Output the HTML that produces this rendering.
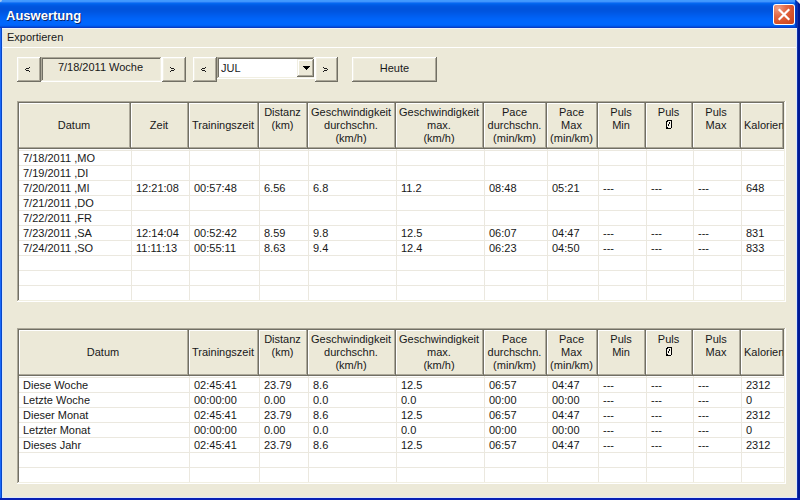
<!DOCTYPE html>
<html><head><meta charset="utf-8"><style>
html,body{margin:0;padding:0;}
body{width:800px;height:500px;overflow:hidden;position:relative;background:#ECE9D8;font-family:"Liberation Sans",sans-serif;font-size:11px;color:#000;}
div{position:absolute;box-sizing:border-box;}
.t{position:absolute;white-space:nowrap;line-height:13px;color:#181818;}
.c{text-align:center;}
.tt{position:absolute;white-space:nowrap;font-weight:bold;font-size:13px;line-height:16px;}
.os{display:inline-block;width:6px;height:9px;box-sizing:border-box;border:1px solid #000;border-left-width:2px;border-bottom-width:2px;position:relative;top:1px;background:linear-gradient(to top right,transparent 43%,#000 43%,#000 60%,transparent 60%);}
</style></head><body>
<div style="left:0;top:0;width:800px;height:28px;background:linear-gradient(to bottom,#4299FE 0px,#4299FE 1px,#3F95FD 1px,#3F95FD 2px,#2078F6 2px,#2078F6 3px,#0367EF 3px,#0367EF 4px,#015EE8 4px,#015EE8 5px,#0059E3 5px,#0059E3 6px,#0055DF 6px,#0055DF 7px,#0054DD 7px,#0054DD 8px,#0053DC 8px,#0053DC 9px,#0053DC 9px,#0053DC 10px,#0054DE 10px,#0054DE 11px,#0055E0 11px,#0055E0 12px,#0057E3 12px,#0057E3 13px,#0059E7 13px,#0059E7 14px,#005BEA 14px,#005BEA 15px,#005DEE 15px,#005DEE 16px,#005FF1 16px,#005FF1 17px,#0061F4 17px,#0061F4 18px,#0063F7 18px,#0063F7 19px,#0064F9 19px,#0064F9 20px,#0065FB 20px,#0065FB 21px,#0066FC 21px,#0066FC 22px,#0066FD 22px,#0066FD 23px,#0066FD 23px,#0066FD 24px,#0065FC 24px,#0065FC 25px,#0060F4 25px,#0060F4 26px,#0052E2 26px,#0052E2 27px,#0A3CC4 27px,#0A3CC4 28px);"></div>
<div style="left:0;top:0;width:2px;height:2px;background:#A8C8F0;border-radius:0 0 2px 0;"></div>
<span class="tt" style="left:7px;top:9px;color:#0A246A;">Auswertung</span>
<span class="tt" style="left:6px;top:8px;color:#FFFFFF;">Auswertung</span>
<div style="left:773px;top:4px;width:22px;height:21px;border-radius:3px;background:#FFFFFF;"></div>
<div style="left:774px;top:5px;width:20px;height:19px;border-radius:2px;background:radial-gradient(circle at 20% 15%,#F0A088 0%,#E36A47 35%,#D8532C 65%,#C8411A 100%);"></div>
<svg style="position:absolute;left:773px;top:4px" width="22" height="21"><path d="M6.5 6 L15.5 15 M15.5 6 L6.5 15" stroke="#FFFFFF" stroke-width="2.2" stroke-linecap="square"/></svg>
<div style="left:0;top:28px;width:1px;height:472px;background:#1A68F8;"></div>
<div style="left:1px;top:28px;width:1px;height:472px;background:#0848C8;"></div>
<div style="left:2px;top:28px;width:1px;height:470px;background:#DCE8FA;"></div>
<div style="left:796px;top:28px;width:1px;height:470px;background:#DCE8FA;"></div>
<div style="left:797px;top:0;width:1px;height:500px;background:#1232A8;"></div>
<div style="left:798px;top:0;width:2px;height:500px;background:#001A94;"></div>
<div style="left:795px;top:0;width:2px;height:28px;background:linear-gradient(to right,#0048D0,#0028B0);"></div>
<div style="left:2px;top:497px;width:795px;height:1px;background:#DCE8FA;"></div>
<div style="left:0;top:498px;width:800px;height:2px;background:#0820B4;"></div>
<svg style="position:absolute;left:794px;top:0" width="6" height="6"><path d="M2 0 L6 0 L6 4 Z" fill="#E8EEF8"/></svg>
<div style="left:3px;top:29px;width:793px;height:468px;background:#ECE9D8;"></div>
<div style="left:2px;top:28px;width:795px;height:1px;background:#F0F4FA;"></div>
<span class="t" style="left:7px;top:31px;">Exportieren</span>
<div style="left:3px;top:47px;width:793px;height:1px;background:#FFFFFF;"></div>
<div style="left:17px;top:57px;width:24px;height:25px;box-shadow:inset -1px -1px #716F64,inset 1px 1px #FFFFFF,inset -2px -2px #ACA899,inset 2px 2px #F1EFE2;background:#ECE9D8;"></div>
<div style="left:29px;top:67px;width:1px;height:1px;background:#1a1a1a;"></div>
<div style="left:26px;top:68px;width:3px;height:1px;background:#1a1a1a;"></div>
<div style="left:25px;top:69px;width:1px;height:1px;background:#1a1a1a;"></div>
<div style="left:26px;top:70px;width:3px;height:1px;background:#1a1a1a;"></div>
<div style="left:29px;top:71px;width:1px;height:1px;background:#1a1a1a;"></div>
<div style="left:41px;top:57px;width:121px;height:25px;box-shadow:inset -1px -1px #FFFFFF,inset 1px 1px #ACA899,inset -2px -2px #F1EFE2,inset 2px 2px #716F64;background:#ECE9D8;"></div>
<span class="t c" style="left:41px;width:119px;top:61px;">7/18/2011 Woche</span>
<div style="left:162px;top:57px;width:24px;height:25px;box-shadow:inset -1px -1px #716F64,inset 1px 1px #FFFFFF,inset -2px -2px #ACA899,inset 2px 2px #F1EFE2;background:#ECE9D8;"></div>
<div style="left:170px;top:67px;width:1px;height:1px;background:#1a1a1a;"></div>
<div style="left:171px;top:68px;width:3px;height:1px;background:#1a1a1a;"></div>
<div style="left:174px;top:69px;width:1px;height:1px;background:#1a1a1a;"></div>
<div style="left:171px;top:70px;width:3px;height:1px;background:#1a1a1a;"></div>
<div style="left:170px;top:71px;width:1px;height:1px;background:#1a1a1a;"></div>
<div style="left:193px;top:57px;width:24px;height:25px;box-shadow:inset -1px -1px #716F64,inset 1px 1px #FFFFFF,inset -2px -2px #ACA899,inset 2px 2px #F1EFE2;background:#ECE9D8;"></div>
<div style="left:205px;top:67px;width:1px;height:1px;background:#1a1a1a;"></div>
<div style="left:202px;top:68px;width:3px;height:1px;background:#1a1a1a;"></div>
<div style="left:201px;top:69px;width:1px;height:1px;background:#1a1a1a;"></div>
<div style="left:202px;top:70px;width:3px;height:1px;background:#1a1a1a;"></div>
<div style="left:205px;top:71px;width:1px;height:1px;background:#1a1a1a;"></div>
<div style="left:217px;top:57px;width:98px;height:22px;box-shadow:inset -1px -1px #FFFFFF,inset 1px 1px #ACA899,inset -2px -2px #F1EFE2,inset 2px 2px #716F64;background:#FFFFFF;"></div>
<span class="t" style="left:221px;top:62px;color:#222;">JUL</span>
<div style="left:297px;top:59px;width:17px;height:18px;box-shadow:inset -1px -1px #716F64,inset 1px 1px #F1EFE2,inset -2px -2px #ACA899,inset 2px 2px #FFFFFF;background:#ECE9D8;"></div>
<div style="left:303px;top:66px;width:7px;height:1px;background:#000;"></div>
<div style="left:304px;top:67px;width:5px;height:1px;background:#000;"></div>
<div style="left:305px;top:68px;width:3px;height:1px;background:#000;"></div>
<div style="left:306px;top:69px;width:1px;height:1px;background:#000;"></div>
<div style="left:315px;top:57px;width:23px;height:25px;box-shadow:inset -1px -1px #716F64,inset 1px 1px #FFFFFF,inset -2px -2px #ACA899,inset 2px 2px #F1EFE2;background:#ECE9D8;"></div>
<div style="left:323px;top:67px;width:1px;height:1px;background:#1a1a1a;"></div>
<div style="left:324px;top:68px;width:3px;height:1px;background:#1a1a1a;"></div>
<div style="left:327px;top:69px;width:1px;height:1px;background:#1a1a1a;"></div>
<div style="left:324px;top:70px;width:3px;height:1px;background:#1a1a1a;"></div>
<div style="left:323px;top:71px;width:1px;height:1px;background:#1a1a1a;"></div>
<div style="left:352px;top:57px;width:85px;height:25px;box-shadow:inset -1px -1px #716F64,inset 1px 1px #FFFFFF,inset -2px -2px #ACA899,inset 2px 2px #F1EFE2;background:#ECE9D8;"></div>
<span class="t c" style="left:352px;width:85px;top:62px;">Heute</span>
<div style="left:17px;top:101px;width:769px;height:201px;box-shadow:inset -1px -1px #FFFFFF,inset 1px 1px #ACA899,inset -2px -2px #F1EFE2,inset 2px 2px #716F64;background:#FFFFFF;"></div>
<div style="left:19px;top:103px;width:112px;height:46px;box-shadow:inset -1px -1px #716F64,inset -2px -2px #ACA899,inset 1px 1px #FFFFFF;background:#ECE9D8;"></div>
<span class="t c" style="left:19px;width:110px;top:119px;">Datum</span>
<div style="left:131px;top:103px;width:58px;height:46px;box-shadow:inset -1px -1px #716F64,inset -2px -2px #ACA899,inset 1px 1px #FFFFFF;background:#ECE9D8;"></div>
<span class="t c" style="left:131px;width:56px;top:119px;">Zeit</span>
<div style="left:189px;top:103px;width:70px;height:46px;box-shadow:inset -1px -1px #716F64,inset -2px -2px #ACA899,inset 1px 1px #FFFFFF;background:#ECE9D8;"></div>
<span class="t c" style="left:189px;width:68px;top:119px;">Trainingszeit</span>
<div style="left:259px;top:103px;width:49px;height:46px;box-shadow:inset -1px -1px #716F64,inset -2px -2px #ACA899,inset 1px 1px #FFFFFF;background:#ECE9D8;"></div>
<span class="t c" style="left:259px;width:47px;top:106px;">Distanz<br>(km)</span>
<div style="left:308px;top:103px;width:88px;height:46px;box-shadow:inset -1px -1px #716F64,inset -2px -2px #ACA899,inset 1px 1px #FFFFFF;background:#ECE9D8;"></div>
<span class="t c" style="left:308px;width:86px;top:106px;">Geschwindigkeit<br>durchschn.<br>(km/h)</span>
<div style="left:396px;top:103px;width:88px;height:46px;box-shadow:inset -1px -1px #716F64,inset -2px -2px #ACA899,inset 1px 1px #FFFFFF;background:#ECE9D8;"></div>
<span class="t c" style="left:396px;width:86px;top:106px;">Geschwindigkeit<br>max.<br>(km/h)</span>
<div style="left:484px;top:103px;width:63px;height:46px;box-shadow:inset -1px -1px #716F64,inset -2px -2px #ACA899,inset 1px 1px #FFFFFF;background:#ECE9D8;"></div>
<span class="t c" style="left:484px;width:61px;top:106px;">Pace<br>durchschn.<br>(min/km)</span>
<div style="left:547px;top:103px;width:51px;height:46px;box-shadow:inset -1px -1px #716F64,inset -2px -2px #ACA899,inset 1px 1px #FFFFFF;background:#ECE9D8;"></div>
<span class="t c" style="left:547px;width:49px;top:106px;">Pace<br>Max<br>(min/km)</span>
<div style="left:598px;top:103px;width:48px;height:46px;box-shadow:inset -1px -1px #716F64,inset -2px -2px #ACA899,inset 1px 1px #FFFFFF;background:#ECE9D8;"></div>
<span class="t c" style="left:598px;width:46px;top:106px;">Puls<br>Min</span>
<div style="left:646px;top:103px;width:47px;height:46px;box-shadow:inset -1px -1px #716F64,inset -2px -2px #ACA899,inset 1px 1px #FFFFFF;background:#ECE9D8;"></div>
<div style="left:667px;top:121px;width:4px;height:7px;background:#F6F4EA;"></div>
<div style="left:667px;top:120px;width:5px;height:1px;background:#000;"></div>
<div style="left:666px;top:121px;width:2px;height:1px;background:#000;"></div>
<div style="left:671px;top:121px;width:1px;height:1px;background:#000;"></div>
<div style="left:666px;top:122px;width:1px;height:1px;background:#000;"></div>
<div style="left:669px;top:122px;width:1px;height:1px;background:#000;"></div>
<div style="left:671px;top:122px;width:1px;height:1px;background:#000;"></div>
<div style="left:666px;top:123px;width:1px;height:1px;background:#000;"></div>
<div style="left:669px;top:123px;width:1px;height:1px;background:#000;"></div>
<div style="left:671px;top:123px;width:1px;height:1px;background:#000;"></div>
<div style="left:666px;top:124px;width:1px;height:1px;background:#000;"></div>
<div style="left:668px;top:124px;width:1px;height:1px;background:#000;"></div>
<div style="left:671px;top:124px;width:1px;height:1px;background:#000;"></div>
<div style="left:666px;top:125px;width:1px;height:1px;background:#000;"></div>
<div style="left:668px;top:125px;width:1px;height:1px;background:#000;"></div>
<div style="left:671px;top:125px;width:1px;height:1px;background:#000;"></div>
<div style="left:666px;top:126px;width:1px;height:1px;background:#000;"></div>
<div style="left:671px;top:126px;width:1px;height:1px;background:#000;"></div>
<div style="left:666px;top:127px;width:2px;height:1px;background:#000;"></div>
<div style="left:671px;top:127px;width:1px;height:1px;background:#000;"></div>
<div style="left:666px;top:128px;width:5px;height:1px;background:#000;"></div>
<span class="t c" style="left:646px;width:45px;top:106px;">Puls</span>
<div style="left:693px;top:103px;width:48px;height:46px;box-shadow:inset -1px -1px #716F64,inset -2px -2px #ACA899,inset 1px 1px #FFFFFF;background:#ECE9D8;"></div>
<span class="t c" style="left:693px;width:46px;top:106px;">Puls<br>Max</span>
<div style="left:741px;top:103px;width:43px;height:46px;box-shadow:inset -1px -1px #716F64,inset -2px -2px #ACA899,inset 1px 1px #FFFFFF;background:#ECE9D8;"></div>
<span class="t" style="left:744px;width:39px;overflow:hidden;top:119px;">Kalorien</span>
<div style="left:19px;top:150px;width:765px;height:1px;background:#EBE8DF;"></div>
<div style="left:19px;top:165px;width:765px;height:1px;background:#EBE8DF;"></div>
<div style="left:19px;top:180px;width:765px;height:1px;background:#EBE8DF;"></div>
<div style="left:19px;top:195px;width:765px;height:1px;background:#EBE8DF;"></div>
<div style="left:19px;top:210px;width:765px;height:1px;background:#EBE8DF;"></div>
<div style="left:19px;top:225px;width:765px;height:1px;background:#EBE8DF;"></div>
<div style="left:19px;top:240px;width:765px;height:1px;background:#EBE8DF;"></div>
<div style="left:19px;top:255px;width:765px;height:1px;background:#EBE8DF;"></div>
<div style="left:19px;top:270px;width:765px;height:1px;background:#EBE8DF;"></div>
<div style="left:19px;top:285px;width:765px;height:1px;background:#EBE8DF;"></div>
<div style="left:131px;top:149px;width:1px;height:151px;background:#EBE8DF;"></div>
<div style="left:189px;top:149px;width:1px;height:151px;background:#EBE8DF;"></div>
<div style="left:259px;top:149px;width:1px;height:151px;background:#EBE8DF;"></div>
<div style="left:308px;top:149px;width:1px;height:151px;background:#EBE8DF;"></div>
<div style="left:396px;top:149px;width:1px;height:151px;background:#EBE8DF;"></div>
<div style="left:484px;top:149px;width:1px;height:151px;background:#EBE8DF;"></div>
<div style="left:547px;top:149px;width:1px;height:151px;background:#EBE8DF;"></div>
<div style="left:598px;top:149px;width:1px;height:151px;background:#EBE8DF;"></div>
<div style="left:646px;top:149px;width:1px;height:151px;background:#EBE8DF;"></div>
<div style="left:693px;top:149px;width:1px;height:151px;background:#EBE8DF;"></div>
<div style="left:741px;top:149px;width:1px;height:151px;background:#EBE8DF;"></div>
<span class="t" style="left:23px;top:152px;">7/18/2011 ,MO</span>
<span class="t" style="left:23px;top:167px;">7/19/2011 ,DI</span>
<span class="t" style="left:23px;top:182px;">7/20/2011 ,MI</span>
<span class="t" style="left:136px;top:182px;">12:21:08</span>
<span class="t" style="left:194px;top:182px;">00:57:48</span>
<span class="t" style="left:264px;top:182px;">6.56</span>
<span class="t" style="left:313px;top:182px;">6.8</span>
<span class="t" style="left:401px;top:182px;">11.2</span>
<span class="t" style="left:489px;top:182px;">08:48</span>
<span class="t" style="left:552px;top:182px;">05:21</span>
<span class="t" style="left:603px;top:182px;">---</span>
<span class="t" style="left:651px;top:182px;">---</span>
<span class="t" style="left:698px;top:182px;">---</span>
<span class="t" style="left:746px;top:182px;">648</span>
<span class="t" style="left:23px;top:197px;">7/21/2011 ,DO</span>
<span class="t" style="left:23px;top:212px;">7/22/2011 ,FR</span>
<span class="t" style="left:23px;top:227px;">7/23/2011 ,SA</span>
<span class="t" style="left:136px;top:227px;">12:14:04</span>
<span class="t" style="left:194px;top:227px;">00:52:42</span>
<span class="t" style="left:264px;top:227px;">8.59</span>
<span class="t" style="left:313px;top:227px;">9.8</span>
<span class="t" style="left:401px;top:227px;">12.5</span>
<span class="t" style="left:489px;top:227px;">06:07</span>
<span class="t" style="left:552px;top:227px;">04:47</span>
<span class="t" style="left:603px;top:227px;">---</span>
<span class="t" style="left:651px;top:227px;">---</span>
<span class="t" style="left:698px;top:227px;">---</span>
<span class="t" style="left:746px;top:227px;">831</span>
<span class="t" style="left:23px;top:242px;">7/24/2011 ,SO</span>
<span class="t" style="left:136px;top:242px;">11:11:13</span>
<span class="t" style="left:194px;top:242px;">00:55:11</span>
<span class="t" style="left:264px;top:242px;">8.63</span>
<span class="t" style="left:313px;top:242px;">9.4</span>
<span class="t" style="left:401px;top:242px;">12.4</span>
<span class="t" style="left:489px;top:242px;">06:23</span>
<span class="t" style="left:552px;top:242px;">04:50</span>
<span class="t" style="left:603px;top:242px;">---</span>
<span class="t" style="left:651px;top:242px;">---</span>
<span class="t" style="left:698px;top:242px;">---</span>
<span class="t" style="left:746px;top:242px;">833</span>
<div style="left:17px;top:328px;width:769px;height:156px;box-shadow:inset -1px -1px #FFFFFF,inset 1px 1px #ACA899,inset -2px -2px #F1EFE2,inset 2px 2px #716F64;background:#FFFFFF;"></div>
<div style="left:19px;top:330px;width:170px;height:46px;box-shadow:inset -1px -1px #716F64,inset -2px -2px #ACA899,inset 1px 1px #FFFFFF;background:#ECE9D8;"></div>
<span class="t c" style="left:19px;width:168px;top:346px;">Datum</span>
<div style="left:189px;top:330px;width:70px;height:46px;box-shadow:inset -1px -1px #716F64,inset -2px -2px #ACA899,inset 1px 1px #FFFFFF;background:#ECE9D8;"></div>
<span class="t c" style="left:189px;width:68px;top:346px;">Trainingszeit</span>
<div style="left:259px;top:330px;width:49px;height:46px;box-shadow:inset -1px -1px #716F64,inset -2px -2px #ACA899,inset 1px 1px #FFFFFF;background:#ECE9D8;"></div>
<span class="t c" style="left:259px;width:47px;top:333px;">Distanz<br>(km)</span>
<div style="left:308px;top:330px;width:88px;height:46px;box-shadow:inset -1px -1px #716F64,inset -2px -2px #ACA899,inset 1px 1px #FFFFFF;background:#ECE9D8;"></div>
<span class="t c" style="left:308px;width:86px;top:333px;">Geschwindigkeit<br>durchschn.<br>(km/h)</span>
<div style="left:396px;top:330px;width:88px;height:46px;box-shadow:inset -1px -1px #716F64,inset -2px -2px #ACA899,inset 1px 1px #FFFFFF;background:#ECE9D8;"></div>
<span class="t c" style="left:396px;width:86px;top:333px;">Geschwindigkeit<br>max.<br>(km/h)</span>
<div style="left:484px;top:330px;width:63px;height:46px;box-shadow:inset -1px -1px #716F64,inset -2px -2px #ACA899,inset 1px 1px #FFFFFF;background:#ECE9D8;"></div>
<span class="t c" style="left:484px;width:61px;top:333px;">Pace<br>durchschn.<br>(min/km)</span>
<div style="left:547px;top:330px;width:51px;height:46px;box-shadow:inset -1px -1px #716F64,inset -2px -2px #ACA899,inset 1px 1px #FFFFFF;background:#ECE9D8;"></div>
<span class="t c" style="left:547px;width:49px;top:333px;">Pace<br>Max<br>(min/km)</span>
<div style="left:598px;top:330px;width:48px;height:46px;box-shadow:inset -1px -1px #716F64,inset -2px -2px #ACA899,inset 1px 1px #FFFFFF;background:#ECE9D8;"></div>
<span class="t c" style="left:598px;width:46px;top:333px;">Puls<br>Min</span>
<div style="left:646px;top:330px;width:47px;height:46px;box-shadow:inset -1px -1px #716F64,inset -2px -2px #ACA899,inset 1px 1px #FFFFFF;background:#ECE9D8;"></div>
<div style="left:667px;top:348px;width:4px;height:7px;background:#F6F4EA;"></div>
<div style="left:667px;top:347px;width:5px;height:1px;background:#000;"></div>
<div style="left:666px;top:348px;width:2px;height:1px;background:#000;"></div>
<div style="left:671px;top:348px;width:1px;height:1px;background:#000;"></div>
<div style="left:666px;top:349px;width:1px;height:1px;background:#000;"></div>
<div style="left:669px;top:349px;width:1px;height:1px;background:#000;"></div>
<div style="left:671px;top:349px;width:1px;height:1px;background:#000;"></div>
<div style="left:666px;top:350px;width:1px;height:1px;background:#000;"></div>
<div style="left:669px;top:350px;width:1px;height:1px;background:#000;"></div>
<div style="left:671px;top:350px;width:1px;height:1px;background:#000;"></div>
<div style="left:666px;top:351px;width:1px;height:1px;background:#000;"></div>
<div style="left:668px;top:351px;width:1px;height:1px;background:#000;"></div>
<div style="left:671px;top:351px;width:1px;height:1px;background:#000;"></div>
<div style="left:666px;top:352px;width:1px;height:1px;background:#000;"></div>
<div style="left:668px;top:352px;width:1px;height:1px;background:#000;"></div>
<div style="left:671px;top:352px;width:1px;height:1px;background:#000;"></div>
<div style="left:666px;top:353px;width:1px;height:1px;background:#000;"></div>
<div style="left:671px;top:353px;width:1px;height:1px;background:#000;"></div>
<div style="left:666px;top:354px;width:2px;height:1px;background:#000;"></div>
<div style="left:671px;top:354px;width:1px;height:1px;background:#000;"></div>
<div style="left:666px;top:355px;width:5px;height:1px;background:#000;"></div>
<span class="t c" style="left:646px;width:45px;top:333px;">Puls</span>
<div style="left:693px;top:330px;width:48px;height:46px;box-shadow:inset -1px -1px #716F64,inset -2px -2px #ACA899,inset 1px 1px #FFFFFF;background:#ECE9D8;"></div>
<span class="t c" style="left:693px;width:46px;top:333px;">Puls<br>Max</span>
<div style="left:741px;top:330px;width:43px;height:46px;box-shadow:inset -1px -1px #716F64,inset -2px -2px #ACA899,inset 1px 1px #FFFFFF;background:#ECE9D8;"></div>
<span class="t" style="left:744px;width:39px;overflow:hidden;top:346px;">Kalorien</span>
<div style="left:19px;top:377px;width:765px;height:1px;background:#EBE8DF;"></div>
<div style="left:19px;top:392px;width:765px;height:1px;background:#EBE8DF;"></div>
<div style="left:19px;top:407px;width:765px;height:1px;background:#EBE8DF;"></div>
<div style="left:19px;top:422px;width:765px;height:1px;background:#EBE8DF;"></div>
<div style="left:19px;top:437px;width:765px;height:1px;background:#EBE8DF;"></div>
<div style="left:19px;top:452px;width:765px;height:1px;background:#EBE8DF;"></div>
<div style="left:19px;top:467px;width:765px;height:1px;background:#EBE8DF;"></div>
<div style="left:189px;top:376px;width:1px;height:106px;background:#EBE8DF;"></div>
<div style="left:259px;top:376px;width:1px;height:106px;background:#EBE8DF;"></div>
<div style="left:308px;top:376px;width:1px;height:106px;background:#EBE8DF;"></div>
<div style="left:396px;top:376px;width:1px;height:106px;background:#EBE8DF;"></div>
<div style="left:484px;top:376px;width:1px;height:106px;background:#EBE8DF;"></div>
<div style="left:547px;top:376px;width:1px;height:106px;background:#EBE8DF;"></div>
<div style="left:598px;top:376px;width:1px;height:106px;background:#EBE8DF;"></div>
<div style="left:646px;top:376px;width:1px;height:106px;background:#EBE8DF;"></div>
<div style="left:693px;top:376px;width:1px;height:106px;background:#EBE8DF;"></div>
<div style="left:741px;top:376px;width:1px;height:106px;background:#EBE8DF;"></div>
<span class="t" style="left:23px;top:379px;">Diese Woche</span>
<span class="t" style="left:194px;top:379px;">02:45:41</span>
<span class="t" style="left:264px;top:379px;">23.79</span>
<span class="t" style="left:313px;top:379px;">8.6</span>
<span class="t" style="left:401px;top:379px;">12.5</span>
<span class="t" style="left:489px;top:379px;">06:57</span>
<span class="t" style="left:552px;top:379px;">04:47</span>
<span class="t" style="left:603px;top:379px;">---</span>
<span class="t" style="left:651px;top:379px;">---</span>
<span class="t" style="left:698px;top:379px;">---</span>
<span class="t" style="left:746px;top:379px;">2312</span>
<span class="t" style="left:23px;top:394px;">Letzte Woche</span>
<span class="t" style="left:194px;top:394px;">00:00:00</span>
<span class="t" style="left:264px;top:394px;">0.00</span>
<span class="t" style="left:313px;top:394px;">0.0</span>
<span class="t" style="left:401px;top:394px;">0.0</span>
<span class="t" style="left:489px;top:394px;">00:00</span>
<span class="t" style="left:552px;top:394px;">00:00</span>
<span class="t" style="left:603px;top:394px;">---</span>
<span class="t" style="left:651px;top:394px;">---</span>
<span class="t" style="left:698px;top:394px;">---</span>
<span class="t" style="left:746px;top:394px;">0</span>
<span class="t" style="left:23px;top:409px;">Dieser Monat</span>
<span class="t" style="left:194px;top:409px;">02:45:41</span>
<span class="t" style="left:264px;top:409px;">23.79</span>
<span class="t" style="left:313px;top:409px;">8.6</span>
<span class="t" style="left:401px;top:409px;">12.5</span>
<span class="t" style="left:489px;top:409px;">06:57</span>
<span class="t" style="left:552px;top:409px;">04:47</span>
<span class="t" style="left:603px;top:409px;">---</span>
<span class="t" style="left:651px;top:409px;">---</span>
<span class="t" style="left:698px;top:409px;">---</span>
<span class="t" style="left:746px;top:409px;">2312</span>
<span class="t" style="left:23px;top:424px;">Letzter Monat</span>
<span class="t" style="left:194px;top:424px;">00:00:00</span>
<span class="t" style="left:264px;top:424px;">0.00</span>
<span class="t" style="left:313px;top:424px;">0.0</span>
<span class="t" style="left:401px;top:424px;">0.0</span>
<span class="t" style="left:489px;top:424px;">00:00</span>
<span class="t" style="left:552px;top:424px;">00:00</span>
<span class="t" style="left:603px;top:424px;">---</span>
<span class="t" style="left:651px;top:424px;">---</span>
<span class="t" style="left:698px;top:424px;">---</span>
<span class="t" style="left:746px;top:424px;">0</span>
<span class="t" style="left:23px;top:439px;">Dieses Jahr</span>
<span class="t" style="left:194px;top:439px;">02:45:41</span>
<span class="t" style="left:264px;top:439px;">23.79</span>
<span class="t" style="left:313px;top:439px;">8.6</span>
<span class="t" style="left:401px;top:439px;">12.5</span>
<span class="t" style="left:489px;top:439px;">06:57</span>
<span class="t" style="left:552px;top:439px;">04:47</span>
<span class="t" style="left:603px;top:439px;">---</span>
<span class="t" style="left:651px;top:439px;">---</span>
<span class="t" style="left:698px;top:439px;">---</span>
<span class="t" style="left:746px;top:439px;">2312</span>
</body></html>
